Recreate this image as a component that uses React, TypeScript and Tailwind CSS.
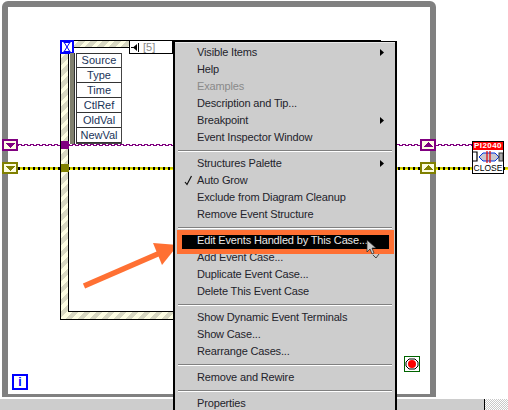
import React from "react";

const font = "font-['Liberation_Sans',Arial,sans-serif]";
const stripes =
  "bg-[repeating-linear-gradient(135deg,#fdfde2_0,#fdfde2_4px,#d8d8c2_4px,#d8d8c2_8.5px)]";

type Item = { t: string; sub?: boolean; off?: boolean; check?: boolean; hot?: boolean };
const groups: Item[][] = [
  [
    { t: "Visible Items", sub: true },
    { t: "Help" },
    { t: "Examples", off: true },
    { t: "Description and Tip..." },
    { t: "Breakpoint", sub: true },
    { t: "Event Inspector Window" },
  ],
  [
    { t: "Structures Palette", sub: true },
    { t: "Auto Grow", check: true },
    { t: "Exclude from Diagram Cleanup" },
    { t: "Remove Event Structure" },
  ],
  [
    { t: "Edit Events Handled by This Case...", hot: true },
    { t: "Add Event Case..." },
    { t: "Duplicate Event Case..." },
    { t: "Delete This Event Case" },
  ],
  [{ t: "Show Dynamic Event Terminals" }, { t: "Show Case..." }, { t: "Rearrange Cases..." }],
  [{ t: "Remove and Rewire" }],
  [{ t: "Properties" }],
];

function Row({ it }: { it: Item }) {
  return (
    <div
      className={`h-[17px] flex items-center pl-[6px] pr-[11px] text-[11px] leading-[17px] tracking-[-0.15px] whitespace-nowrap ${
        it.hot ? "bg-black text-[#e8e8e8] mx-[5px] !pl-[17px] !pr-[6px]" : it.off ? "text-[#8a8a8a]" : "text-[#23232b]"
      }`}
    >
      {it.hot ? null : (
        <span className="w-[14px] shrink-0 mr-[2px] flex justify-center">
          {it.check ? (
            <svg width="9" height="11" viewBox="0 0 9 11">
              <path d="M1 7 L3 9.5 L7.5 1" fill="none" stroke="#111" strokeWidth="1.2" />
            </svg>
          ) : null}
        </span>
      )}
      <span className="flex-1">{it.t}</span>
      {it.sub ? (
        <svg width="4" height="7" viewBox="0 0 4 7">
          <path d="M0 0 L4 3.5 L0 7 Z" fill="#000" />
        </svg>
      ) : null}
    </div>
  );
}

function Menu() {
  return (
    <div
      className={`absolute left-[173px] top-[41px] w-[224px] h-[369px] bg-[#cdcdcd] border-x-2 border-t border-x-black border-t-black ${font}`}
    >
      <div className="border-t border-[#e8e8e8] pt-[1px]">
        {groups.map((g, i) => (
          <div key={i}>
            {i > 0 ? (
              <div className="mx-[3px] mt-[4px] mb-[3px] h-[2px] border-t border-b border-t-[#808080] border-b-white" />
            ) : null}
            {g.map((it) => (
              <Row key={it.t} it={it} />
            ))}
          </div>
        ))}
      </div>
    </div>
  );
}

function Cluster() {
  return (
    <div
      className={`absolute left-[76px] top-[53px] w-[46px] flex flex-col border-r border-b border-[#444] bg-white ${font}`}
    >
      {["Source", "Type", "Time", "CtlRef", "OldVal", "NewVal"].map((n) => (
        <div
          key={n}
          className="h-[15px] border-l border-b border-[#333] first:border-t flex items-center justify-center text-[11px] leading-none text-[#1a3358]"
        >
          {n}
        </div>
      ))}
    </div>
  );
}

function Diagram() {
  return (
    <svg className="absolute inset-0" width="508" height="398" viewBox="0 0 508 398" shapeRendering="crispEdges">
      <defs>
        <pattern id="wave" width="6" height="2" patternUnits="userSpaceOnUse">
          <rect x="0" y="0" width="4" height="1" fill="#800080" />
          <rect x="3" y="1" width="3" height="1" fill="#800080" />
          <rect x="0" y="1" width="1" height="1" fill="#800080" />
        </pattern>
        <pattern id="dash" width="5" height="3" patternUnits="userSpaceOnUse">
          <rect width="5" height="3" fill="#c8c800" />
          <rect y="1" width="5" height="1" fill="#ffff00" />
          <rect x="3" y="0" width="2" height="3" fill="#000" />
        </pattern>
      </defs>
      {/* wires */}
      <rect x="18" y="144" width="42" height="2" fill="url(#wave)" />
      <rect x="69" y="144" width="105" height="2" fill="url(#wave)" />
      <rect x="397" y="144" width="76" height="2" fill="url(#wave)" />
      <rect x="18" y="167" width="42" height="3" fill="url(#dash)" />
      <rect x="69" y="167" width="105" height="3" fill="url(#dash)" />
      <rect x="397" y="167" width="76" height="3" fill="url(#dash)" />
      <rect x="504" y="167" width="4" height="3" fill="url(#dash)" />
      {/* left shift registers */}
      <rect x="3" y="140" width="14" height="10" fill="#fdfde2" stroke="#800080" strokeWidth="2" />
      <path d="M5 143H15L10 148Z" fill="#800080" />
      <rect x="3" y="163" width="14" height="10" fill="#fdfde2" stroke="#808000" strokeWidth="2" />
      <path d="M5 166H15L10 171Z" fill="#808000" />
      {/* tunnels */}
      <rect x="61" y="141" width="8" height="8" fill="#800080" />
      <rect x="61" y="164" width="8" height="8" fill="#808000" />
      {/* right shift registers */}
      <rect x="421" y="140" width="14" height="10" fill="#fdfde2" stroke="#800080" strokeWidth="2" />
      <path d="M423 147H433L428 142Z" fill="#800080" />
      <rect x="421" y="163" width="14" height="10" fill="#fdfde2" stroke="#808000" strokeWidth="2" />
      <path d="M423 170H433L428 165Z" fill="#808000" />
      {/* stop */}
      <rect x="404.5" y="356.5" width="15" height="15" fill="#fff" stroke="#006400" />
      <g shapeRendering="auto">
        <path d="M409 359H415L418 362V366L415 369H409L406 366V362Z" fill="#fff" stroke="#000" />
        <circle cx="412" cy="364" r="4" fill="#f00" />
        {/* arrow */}
        <path d="M84 286 L160 253" stroke="#ff7033" strokeWidth="5.5" fill="none" />
        <path d="M153 243 L178 245 L162 265 Z" fill="#ff7033" />
      </g>
    </svg>
  );
}

function CloseIcon() {
  return (
    <div className={`absolute left-[472px] top-[141px] w-[32px] h-[33px] border border-black bg-white flex flex-col ${font}`}>
      <div className="h-[8px] bg-[#f00] text-white text-[8px] leading-[8px] text-center font-bold tracking-[0.4px]">
        PI2040
      </div>
      <svg width="30" height="14" viewBox="0 0 30 14" className="block">
        <path d="M0 2H4V11H0" fill="#fff" stroke="#000" strokeWidth="1.2" />
        <path d="M6 7L10 3H22L26 7L22 11H10Z" fill="#c8c8d0" stroke="#0033dd" />
        <path d="M14 1V13M17 1V13" stroke="#e00000" strokeWidth="1.2" />
        <rect x="26" y="3" width="4" height="8" fill="#aaa" stroke="#333" />
      </svg>
      <div className="text-[8.5px] leading-[9px] text-center text-black">CLOSE</div>
    </div>
  );
}

export default function App() {
  return (
    <div className={`w-[508px] h-[410px] overflow-hidden flex flex-col bg-white ${font}`}>
      <div className="relative h-[398px] shrink-0">
        {/* while loop */}
        <div className="absolute left-[2px] top-[1px] w-[434px] h-[396px] border-x-[6px] border-t-[6px] border-b-[3px] border-[#808080] rounded-tl-[6px] rounded-tr-[6px]" />
        {/* event structure */}
        <div className={`absolute left-[60px] top-[40px] w-[321px] h-[280px] border border-black ${stripes} pl-[7px] pr-[7px] pt-[6px] pb-[7px]`}>
          <div className="w-full h-full bg-white border border-black" />
        </div>
        <div className="absolute left-[129px] top-[40px] w-[44px] h-[14px] bg-white border border-black flex items-center text-[11px] text-[#888]">
          <svg width="10" height="9" viewBox="0 0 10 9" className="shrink-0">
            <path d="M1 4.5H4" stroke="#000" />
            <path d="M3 4.5L7 1V8Z" fill="#000" />
            <path d="M8.5 0V14" stroke="#000" />
          </svg>
          <span className="ml-[3px] leading-none">[5]</span>
        </div>
        <div className="absolute left-[60px] top-[40px] w-[14px] h-[14px] border-2 border-[#0000ff] bg-white flex items-center justify-center">
          <svg width="8" height="10" viewBox="0 0 8 10">
            <path d="M0.5 0.5H7.5M0.5 9.5H7.5M1.5 1L6.5 9M6.5 1L1.5 9" stroke="#0000ff" fill="none" />
          </svg>
        </div>
        <div className="absolute left-[70px] top-[53px] w-[5px] h-[91px] bg-[#80806e] border-r border-[#333]" />
        <Cluster />
        <Diagram />
        <CloseIcon />
        <div className="absolute left-[12px] top-[374px] w-[16px] h-[16px] border-2 border-[#0000ff] bg-white flex items-center justify-center text-[#0000ff] font-bold text-[12px] leading-none">
          i
        </div>
      </div>
      <div className="h-[12px] flex border-t border-white">
        <div className="w-[485px] bg-[#cdcdcd] border-r border-black" />
        <div className="flex-1 bg-[repeating-conic-gradient(#c8c8c8_0_25%,#ffffff_0_50%)] bg-[length:2px_2px]" />
      </div>
      <Menu />
      {/* highlight + cursor over the menu */}
      <div className="absolute left-[177px] top-[230px] w-[217px] h-[24px] border-[5px] border-[#ff7033]" />
      <svg className="absolute left-[366px] top-[239px]" width="14" height="20" viewBox="0 0 14 20">
        <path d="M1 1V13L4 10L6 15L8 14L6 9H10Z" fill="#ccc" stroke="#222" strokeWidth="0.7" />
        <path d="M7 16L10 19L13 15" fill="none" stroke="#444" />
      </svg>
    </div>
  );
}
